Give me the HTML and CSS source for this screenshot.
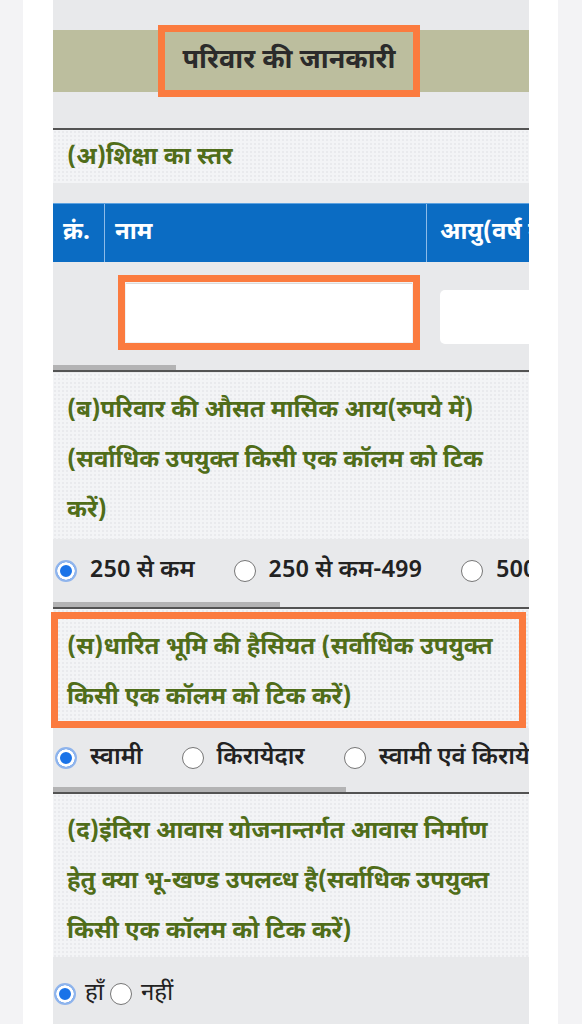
FILE: index.html
```html
<!DOCTYPE html>
<html lang="hi">
<head>
<meta charset="utf-8">
<title>परिवार की जानकारी</title>
<link rel="stylesheet" href="styles.css">
</head>
<body>
<div class="page">
  <div class="content">
    <div class="band"><h2 class="title">परिवार की जानकारी</h2></div>
    <div class="rule rule-top"></div>

    <div class="sec sec-a">(अ)शिक्षा का स्तर</div>

    <div class="scroller table-wrap">
      <div class="grid">
        <div class="thead">
          <div class="th c1">क्रं.</div>
          <div class="th c2">नाम</div>
          <div class="th c3">आयु(वर्ष में)</div>
        </div>
        <div class="trow">
          <div class="td c1"></div>
          <div class="td c2"><div class="hl-input"><div class="input"></div></div></div>
          <div class="td c3"><div class="input round"></div></div>
        </div>
      </div>
    </div>
    <div class="track"><div class="thumb thumb-1"></div></div>
    <div class="rule"></div>

    <div class="sec sec-b">(ब)परिवार की औसत मासिक आय(रुपये में) (सर्वाधिक उपयुक्त किसी एक कॉलम को टिक करें)</div>
    <div class="radios r-b">
      <label class="opt"><span class="radio on"></span><span class="lbl">250 से कम</span></label>
      <label class="opt"><span class="radio"></span><span class="lbl">250 से कम-499</span></label>
      <label class="opt"><span class="radio"></span><span class="lbl">500 से 999</span></label>
    </div>
    <div class="track"><div class="thumb thumb-2"></div></div>
    <div class="rule"></div>

    <div class="sec sec-c">
      (स)धारित भूमि की हैसियत (सर्वाधिक उपयुक्त किसी एक कॉलम को टिक करें)
      <div class="hl-box"></div>
    </div>
    <div class="radios r-c">
      <label class="opt"><span class="radio on"></span><span class="lbl">स्वामी</span></label>
      <label class="opt"><span class="radio"></span><span class="lbl">किरायेदार</span></label>
      <label class="opt"><span class="radio"></span><span class="lbl">स्वामी एवं किरायेदार</span></label>
    </div>
    <div class="track"><div class="thumb thumb-3"></div></div>
    <div class="rule"></div>

    <div class="sec sec-d">(द)इंदिरा आवास योजनान्तर्गत आवास निर्माण हेतु क्या भू-खण्ड उपलव्ध है(सर्वाधिक उपयुक्त किसी एक कॉलम को टिक करें)</div>
    <div class="radios r-d">
      <label class="opt-s"><span class="radio on"></span><span class="lbl-n">हाँ</span></label>
      <label class="opt-s"><span class="radio"></span><span class="lbl-n">नहीं</span></label>
    </div>
  </div>
</div>
</body>
</html>
```

FILE: styles.css
```css
html, body {
  margin: 0;
  padding: 0;
}
body {
  background: #f3f3f5;
  font-family: "Noto Sans Devanagari", "Lohit Devanagari", "Noto Sans", "DejaVu Sans", sans-serif;
  height: 1024px;
  overflow: hidden;
}
.page {
  margin-left: 23px;
  width: 476px;
  padding: 0 29px 0 30px;
  background: #ffffff;
  min-height: 1024px;
}
.content {
  background: #e8e9eb;
  padding-top: 30px;
  min-height: 994px;
}
.band {
  height: 62px;
  background: #bcbe9e;
  display: flex;
  align-items: center;
  justify-content: center;
}
.title {
  margin: 0 0 0 -4px;
  box-sizing: border-box;
  width: 262px;
  height: 72px;
  border: 7px solid #fb7b3f;
  display: flex;
  align-items: center;
  justify-content: center;
  font-size: 27px;
  font-weight: 700;
  color: #2b2b2b;
  white-space: nowrap;
}
.rule {
  height: 2px;
  background: #535353;
}
.rule-top {
  margin-top: 36px;
}
.sec {
  background-color: #f3f4f6;
  background-image: radial-gradient(#e9eaed 0.8px, transparent 1px);
  background-size: 4px 4px;
  color: #506d19;
  font-weight: 700;
  font-size: 24px;
  line-height: 50px;
  padding: 0 14px;
}
.sec-a {
  height: 53px;
  line-height: 56px;
}
.table-wrap {
  margin-top: 20px;
}
.scroller {
  overflow: hidden;
}
.grid {
  width: 700px;
}
.thead {
  display: flex;
  height: 59px;
  background: #0b6cc3;
  border-top: 1px solid #5da2e0;
  box-sizing: border-box;
}
.th {
  color: #ffffff;
  font-weight: 700;
  font-size: 24px;
  display: flex;
  align-items: center;
  padding-left: 10px;
  box-sizing: border-box;
  white-space: nowrap;
}
.c1 { width: 52px; }
.c2 { width: 322px; }
.c3 { width: 326px; }
.th.c1, .th.c2 {
  border-right: 1px solid #8dbbe8;
}
.th.c3 { padding-left: 13px; }
.trow {
  display: flex;
  height: 103px;
}
.td.c1 { border-right: 1px solid transparent; }
.td.c2 {
  padding: 13px 0 0 12px;
  box-sizing: border-box;
  border-right: 1px solid transparent;
}
.hl-input {
  width: 302px;
  height: 75px;
  box-sizing: border-box;
  border: 7px solid #fb7b3f;
  padding: 1px;
  background: #f1f1f1;
}
.hl-input .input {
  height: 100%;
  background: #ffffff;
  border-top: 1px solid #dcdcdc;
  box-sizing: border-box;
}
.td.c3 {
  padding: 28px 0 0 13px;
  box-sizing: border-box;
}
.input.round {
  height: 54px;
  width: 250px;
  background: #ffffff;
  border-radius: 5px;
}
.track {
  height: 5px;
}
.thumb {
  height: 5px;
  background: #b3b3b4;
}
.thumb-1 { width: 123px; }
.thumb-2 { width: 227px; }
.thumb-3 { width: 293px; }
.sec-b {
  margin-top: 1px;
  padding-top: 13px;
  height: 153px;
}
.radios {
  white-space: nowrap;
  overflow: hidden;
  display: flex;
  align-items: center;
  padding-left: 2px;
}
.r-b { height: 63px; }
.r-c { height: 59px; }
.r-d {
  height: 66px;
  align-items: flex-start;
  padding-top: 21px;
  box-sizing: border-box;
  padding-left: 1px;
}
.opt {
  display: inline-flex;
  align-items: center;
  margin-right: 39px;
  flex: none;
}
.opt-s {
  display: inline-flex;
  align-items: center;
  flex: none;
}
.radio {
  width: 22px;
  height: 22px;
  box-sizing: border-box;
  border-radius: 50%;
  border: 1.5px solid #767676;
  background: #ffffff;
  flex: none;
}
.radio.on {
  border: 2px solid #8fb4ec;
  background: #1a73e8;
  box-shadow: inset 0 0 0 3px #ffffff;
}
.lbl {
  margin-left: 13px;
  font-size: 24px;
  font-weight: 600;
  color: #222222;
}
.lbl-n {
  margin-left: 9px;
  margin-right: 6px;
  font-size: 24px;
  font-weight: 400;
  color: #222222;
}
.sec-c {
  position: relative;
  padding-top: 14px;
  height: 105px;
}
.hl-box {
  position: absolute;
  left: -2px;
  top: 3px;
  width: 475px;
  height: 116px;
  box-sizing: border-box;
  border: 7px solid #fb7b3f;
}
.sec-d {
  padding-top: 13px;
  height: 150px;
}
```
